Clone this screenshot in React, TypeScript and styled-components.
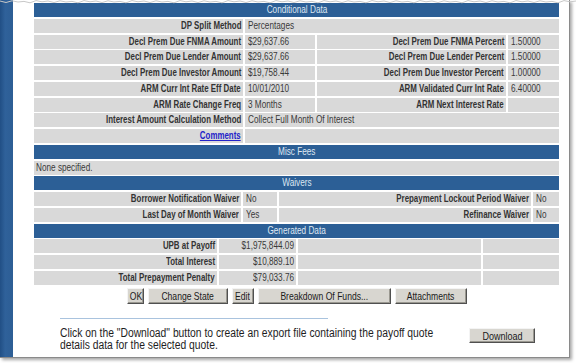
import React from 'react';
import styled, { createGlobalStyle } from 'styled-components';

const SANS = "'Liberation Sans', Arial, sans-serif";

const GlobalStyle = createGlobalStyle`
  html, body {
    margin: 0;
    padding: 0;
    background: #ffffff;
  }
  body {
    font-family: ${SANS};
  }
`;

const Page = styled.div`
  width: 576px;
  height: 363px;
  overflow: hidden;
  background: #ffffff;
  position: relative;
`;

const Frame = styled.div`
  width: 569px;
  height: 357px;
  display: flex;
  background: #ffffff;
  border-right: 1px solid #8a8a8a;
  border-bottom: 1px solid #8a8a8a;
  box-shadow: 2px 2px 3px rgba(0, 0, 0, 0.35);
`;

const SideBar = styled.div`
  width: 13px;
  flex: none;
  background: linear-gradient(to right, #214f85 0%, #2f619a 40%, #2d5e95 100%);
`;

const Main = styled.div`
  flex: 1;
  padding: 3px 9px 0 21px;
  display: flex;
  flex-direction: column;
`;

const Sheet = styled.div`
  width: 525px;
  display: flex;
  flex-direction: column;
  gap: 1.75px;
`;

// the old app renders a narrow face; squeeze Arial metrics horizontally
const Squeeze = styled.span<{ $x: number; $origin: 'left' | 'right' | 'center' }>`
  display: inline-block;
  white-space: nowrap;
  transform: scaleX(${(p) => p.$x});
  transform-origin: ${(p) => p.$origin} center;
`;

const Header = styled.div`
  height: 14px;
  background: #2c5f96;
  color: #dfe7f2;
  font-size: 10px;
  line-height: 14px;
  text-align: center;
`;

const Row = styled.div<{ $cols: string }>`
  display: grid;
  grid-template-columns: ${(p) => p.$cols};
  column-gap: 2px;
  height: 14px;
`;

const Label = styled.div`
  background: #d9d9d9;
  color: #333333;
  font-size: 10px;
  font-weight: bold;
  line-height: 14px;
  text-align: right;
  padding-right: 2px;
  white-space: nowrap;
  overflow: hidden;
`;

const Value = styled.div<{ $span?: number; $right?: boolean }>`
  background: #d9d9d9;
  color: #3a3a3a;
  font-size: 10px;
  line-height: 14px;
  text-align: ${(p) => (p.$right ? 'right' : 'left')};
  padding: ${(p) => (p.$right ? '0 2px 0 0' : '0 0 0 3px')};
  white-space: nowrap;
  overflow: hidden;
  grid-column: ${(p) => (p.$span ? `span ${p.$span}` : 'auto')};
`;

const Full = styled.div`
  height: 14px;
  background: #d9d9d9;
  color: #3a3a3a;
  font-size: 10px;
  line-height: 14px;
  padding-left: 2px;
`;

const LinkText = styled.a`
  color: #2323c8;
  text-decoration: underline;
  cursor: pointer;
`;

const ButtonBar = styled.div`
  width: 525px;
  display: flex;
  justify-content: center;
  gap: 4px;
  margin-top: 3px;
`;

const Btn = styled.button<{ $w: number }>`
  width: ${(p) => p.$w}px;
  height: 16px;
  padding: 0;
  background: #d8d6d0;
  color: #1a1a1a;
  font-family: ${SANS};
  font-size: 11px;
  line-height: 14px;
  border: 1px solid;
  border-color: #f4f4f4 #505050 #505050 #f4f4f4;
  box-shadow: inset -1px -1px 0 #9a9890;
  overflow: visible;
  white-space: nowrap;
`;

const Footer = styled.div`
  padding-left: 26px;
  display: flex;
  flex-direction: column;
`;

const Rule = styled.div`
  width: 268px;
  height: 1px;
  background: #a9c3de;
  margin-top: 14px;
`;

const FooterRow = styled.div`
  display: flex;
  align-items: flex-start;
  margin-top: 8px;
  width: 475px;
`;

const Note = styled.p`
  margin: 0;
  width: 390px;
  font-size: 12px;
  line-height: 12.5px;
  color: #1e1e1e;
`;

const DownloadBtn = styled(Btn)`
  height: 15px;
  margin-left: auto;
  margin-top: 1px;
`;

const Tear = styled.svg`
  position: absolute;
  left: 0;
  top: 0;
`;

const condCols = '209px 70px 189px 51px';
const waiverCols = '207px 34px 252px 26px';
const genCols = '183px 77px 183px 76px';

const conditional: [string, string, string, string][] = [
  ['Decl Prem Due FNMA Amount', '$29,637.66', 'Decl Prem Due FNMA Percent', '1.50000'],
  ['Decl Prem Due Lender Amount', '$29,637.66', 'Decl Prem Due Lender Percent', '1.50000'],
  ['Decl Prem Due Investor Amount', '$19,758.44', 'Decl Prem Due Investor Percent', '1.00000'],
  ['ARM Curr Int Rate Eff Date', '10/01/2010', 'ARM Validated Curr Int Rate', '6.40000'],
  ['ARM Rate Change Freq', '3 Months', 'ARM Next Interest Rate', ''],
];

const generated: [string, string][] = [
  ['UPB at Payoff', '$1,975,844.09'],
  ['Total Interest', '$10,889.10'],
  ['Total Prepayment Penalty', '$79,033.76'],
];

// jagged top edge left by the screen clipping tool
const tearPoints = Array.from({ length: 97 }, (_, i) => {
  const x = i * 6;
  const y = [1, 2.5, 0.8, 2, 1.4, 2.8, 0.6, 1.8][i % 8];
  return `${x},${y}`;
}).join(' ');

const L: React.FC<{ children?: React.ReactNode }> = ({ children }) => (
  <Label>
    <Squeeze $x={0.79} $origin="right">{children}</Squeeze>
  </Label>
);

const V: React.FC<{ children?: React.ReactNode; span?: number; right?: boolean }> = ({
  children,
  span,
  right,
}) => (
  <Value $span={span} $right={right}>
    {children && (
      <Squeeze $x={0.82} $origin={right ? 'right' : 'left'}>
        {children}
      </Squeeze>
    )}
  </Value>
);

const H: React.FC<{ children: React.ReactNode }> = ({ children }) => (
  <Header>
    <Squeeze $x={0.82} $origin="center">{children}</Squeeze>
  </Header>
);

const B: React.FC<{ w: number; children: React.ReactNode }> = ({ w, children }) => (
  <Btn $w={w}>
    <Squeeze $x={0.78} $origin="center">{children}</Squeeze>
  </Btn>
);

const App: React.FC = () => {
  return (
    <Page>
      <GlobalStyle />
      <Frame>
        <SideBar />
        <Main>
          <Sheet>
            <H>Conditional Data</H>
            <Row $cols={condCols}>
              <L>DP Split Method</L>
              <V span={3}>Percentages</V>
            </Row>
            {conditional.map(([l1, v1, l2, v2]) => (
              <Row key={l1} $cols={condCols}>
                <L>{l1}</L>
                <V>{v1}</V>
                <L>{l2}</L>
                <V>{v2}</V>
              </Row>
            ))}
            <Row $cols={condCols}>
              <L>Interest Amount Calculation Method</L>
              <V span={3}>Collect Full Month Of Interest</V>
            </Row>
            <Row $cols={condCols}>
              <L>
                <LinkText>Comments</LinkText>
              </L>
              <V span={3} />
            </Row>

            <H>Misc Fees</H>
            <Full>
              <Squeeze $x={0.82} $origin="left">None specified.</Squeeze>
            </Full>

            <H>Waivers</H>
            <Row $cols={waiverCols}>
              <L>Borrower Notification Waiver</L>
              <V>No</V>
              <L>Prepayment Lockout Period Waiver</L>
              <V>No</V>
            </Row>
            <Row $cols={waiverCols}>
              <L>Last Day of Month Waiver</L>
              <V>Yes</V>
              <L>Refinance Waiver</L>
              <V>No</V>
            </Row>

            <H>Generated Data</H>
            {generated.map(([l, v]) => (
              <Row key={l} $cols={genCols}>
                <L>{l}</L>
                <V right>{v}</V>
                <V />
                <V />
              </Row>
            ))}
          </Sheet>

          <ButtonBar>
            <B w={17}>OK</B>
            <B w={80}>Change State</B>
            <B w={22}>Edit</B>
            <B w={133}>Breakdown Of Funds...</B>
            <B w={72}>Attachments</B>
          </ButtonBar>

          <Footer>
            <Rule />
            <FooterRow>
              <Note>
                <Squeeze $x={0.86} $origin="left">
                  Click on the "Download" button to create an export file containing the payoff quote
                </Squeeze>
                <br />
                <Squeeze $x={0.86} $origin="left">
                  details data for the selected quote.
                </Squeeze>
              </Note>
              <DownloadBtn $w={66}>
                <Squeeze $x={0.82} $origin="center">Download</Squeeze>
              </DownloadBtn>
            </FooterRow>
          </Footer>
        </Main>
      </Frame>
      <Tear width="576" height="4">
        <polyline points={tearPoints} fill="none" stroke="#c8c8c8" strokeWidth="1" />
      </Tear>
    </Page>
  );
};

export default App;
